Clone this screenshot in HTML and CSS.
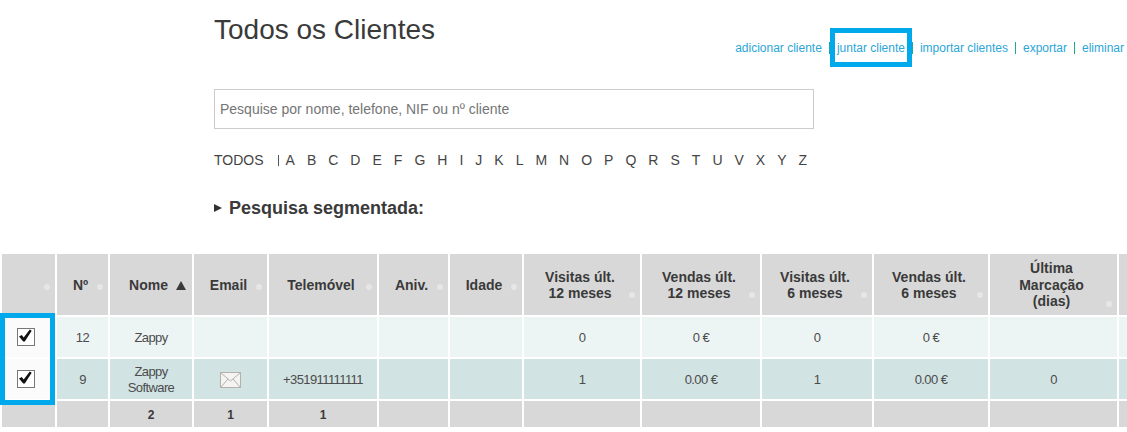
FILE: index.html
```html
<!DOCTYPE html>
<html lang="pt">
<head>
  <meta charset="UTF-8">
  <title>Todos os Clientes</title>
  <link rel="stylesheet" href="styles.css">
</head>
<body>

<div class="content">
  <div class="title-row">
    <h1>Todos os Clientes</h1>
    <div class="actions">
      <a>adicionar cliente</a>
      <a class="marked">juntar cliente</a>
      <a>importar clientes</a>
      <a>exportar</a>
      <a>eliminar</a>
    </div>
  </div>

  <input class="search" type="text" placeholder="Pesquise por nome, telefone, NIF ou nº cliente">

  <div class="letters">
    <span class="all">TODOS</span>
    <span class="sep"></span>
    <span>A</span><span>B</span><span>C</span><span>D</span><span>E</span><span>F</span><span>G</span>
    <span>H</span><span>I</span><span>J</span><span>K</span><span>L</span><span>M</span><span>N</span>
    <span>O</span><span>P</span><span>Q</span><span>R</span><span>S</span><span>T</span><span>U</span>
    <span>V</span><span>X</span><span>Y</span><span>Z</span>
  </div>

  <div class="segment"><span class="arrow"></span>Pesquisa segmentada:</div>
</div>

<div class="table-wrap">
  <table>
    <colgroup>
      <col class="c0"><col class="c1"><col class="c2"><col class="c3"><col class="c4"><col class="c5"><col class="c6">
      <col class="c7"><col class="c8"><col class="c9"><col class="c10"><col class="c11"><col class="c12">
    </colgroup>
    <thead>
      <tr>
        <th><i class="dot"></i></th>
        <th>Nº<i class="dot"></i></th>
        <th class="sorted">Nome<span class="sort-up"></span></th>
        <th>Email<i class="dot"></i></th>
        <th>Telemóvel<i class="dot"></i></th>
        <th>Aniv.<i class="dot"></i></th>
        <th>Idade<i class="dot"></i></th>
        <th>Visitas últ.<br>12 meses<i class="dot two"></i></th>
        <th>Vendas últ.<br>12 meses<i class="dot two"></i></th>
        <th>Visitas últ.<br>6 meses<i class="dot two"></i></th>
        <th>Vendas últ.<br>6 meses<i class="dot two"></i></th>
        <th>Última<br>Marcação<br>(dias)<i class="dot three"></i></th>
        <th></th>
      </tr>
    </thead>
    <tbody>
      <tr class="light">
        <td class="check">
          <svg width="18" height="18" viewBox="0 0 18 18"><rect x="0.5" y="0.5" width="17" height="17" fill="#fff" stroke="#777"/><path d="M2 8.5l2.8-1.6 1.9 2.6L12.8 1.5l1.9 1.2-6.9 10.8H6.2z" fill="#111"/></svg>
        </td>
        <td>12</td>
        <td>Zappy</td>
        <td></td>
        <td></td>
        <td></td>
        <td></td>
        <td>0</td>
        <td>0 €</td>
        <td>0</td>
        <td>0 €</td>
        <td></td>
        <td></td>
      </tr>
      <tr class="dark">
        <td class="check">
          <svg width="18" height="18" viewBox="0 0 18 18"><rect x="0.5" y="0.5" width="17" height="17" fill="#fff" stroke="#777"/><path d="M2 8.5l2.8-1.6 1.9 2.6L12.8 1.5l1.9 1.2-6.9 10.8H6.2z" fill="#111"/></svg>
        </td>
        <td>9</td>
        <td>Zappy<br>Software</td>
        <td>
          <svg class="mail" width="21" height="16" viewBox="0 0 21 16"><rect x="0.5" y="0.5" width="20" height="15" fill="#f4f4f2" stroke="#b5b1aa"/><path d="M1 1l9.5 8L20 1M1 15l7-8M20 15l-7-8" fill="none" stroke="#b5b1aa"/></svg>
        </td>
        <td>+351911111111</td>
        <td></td>
        <td></td>
        <td>1</td>
        <td>0.00 €</td>
        <td>1</td>
        <td>0.00 €</td>
        <td>0</td>
        <td></td>
      </tr>
    </tbody>
    <tfoot>
      <tr>
        <td></td><td></td><td>2</td><td>1</td><td>1</td><td></td><td></td><td></td><td></td><td></td><td></td><td></td><td></td>
      </tr>
    </tfoot>
  </table>
  <div class="check-mark"></div>
</div>

</body>
</html>
```

FILE: styles.css
```css
html, body {
  margin: 0;
  padding: 0;
  height: 432px;
  overflow: hidden;
}

body {
  font-family: "Liberation Sans", Arial, sans-serif;
  color: #333;
  background-color: #fff;
}

.content {
  margin-left: 214px;
  width: 913px;
  box-sizing: border-box;
  padding-right: 3px;
}

.title-row {
  display: flex;
  justify-content: space-between;
  height: 89px;
}

h1 {
  margin: 14px 0 0;
  font-size: 28px;
  line-height: 32px;
  font-weight: normal;
  color: #3a3a3a;
}

.actions {
  display: flex;
  align-items: center;
  height: 12px;
  margin-top: 42px;
  font-size: 12px;
  color: #2ba6d8;
}

.actions a {
  padding: 0 7px;
  border-left: 1px solid #1fa89a;
  line-height: 12px;
}

.actions a:first-child {
  border-left: none;
}

.actions a:last-child {
  padding-right: 0;
}

.marked {
  position: relative;
}

.marked::after {
  content: "";
  position: absolute;
  left: 0;
  top: -14px;
  width: 72px;
  height: 29px;
  border: 5px solid #00a8ec;
}

.search {
  display: block;
  width: 600px;
  height: 40px;
  box-sizing: border-box;
  padding: 0 5px;
  border: 1px solid #ccc;
  font-family: inherit;
  font-size: 14px;
  color: #333;
  outline: none;
}

.search::placeholder {
  color: #757575;
  opacity: 1;
}

.letters {
  display: flex;
  align-items: center;
  gap: 12px;
  margin-top: 23px;
  height: 16px;
  font-size: 14px;
  color: #444;
}

.letters .all {
  margin-right: 2px;
}

.letters .sep {
  width: 1px;
  height: 11px;
  margin-right: -5px;
  background-color: #555;
}

.segment {
  display: flex;
  align-items: center;
  margin-top: 30px;
  height: 20px;
  font-size: 18px;
  font-weight: bold;
  color: #3a3a3a;
}

.arrow {
  width: 0;
  height: 0;
  margin-right: 7px;
  border-left: 8px solid #333;
  border-top: 4px solid transparent;
  border-bottom: 4px solid transparent;
}

.table-wrap {
  position: relative;
  margin-top: 34px;
  width: 1127px;
  overflow: hidden;
}

table {
  table-layout: fixed;
  width: 1134px;
  border-collapse: separate;
  border-spacing: 2px;
  font-size: 13px;
}

.c0 { width: 53px; }
.c1 { width: 51px; }
.c2 { width: 82px; }
.c3 { width: 73px; }
.c4 { width: 108px; }
.c5 { width: 69px; }
.c6 { width: 72px; }
.c7 { width: 116px; }
.c8 { width: 118px; }
.c9 { width: 110px; }
.c10 { width: 114px; }
.c11 { width: 127px; }
.c12 { width: 13px; }

th {
  position: relative;
  height: 61px;
  padding: 1px 10px 0 6px;
  box-sizing: border-box;
  background-color: #d8d8d8;
  color: #3a3a3a;
  font-size: 14px;
  line-height: 16.5px;
  font-weight: bold;
  text-align: center;
}

th.sorted {
  padding-left: 13px;
  padding-right: 0;
}

.sort-up {
  display: inline-block;
  width: 0;
  height: 0;
  margin-left: 8px;
  border-left: 5px solid transparent;
  border-right: 5px solid transparent;
  border-bottom: 9px solid #3a3a3a;
}

.dot {
  position: absolute;
  right: 5px;
  top: 30px;
  width: 6px;
  height: 6px;
  border-radius: 50%;
  background-color: #e6e6e6;
}

.dot.two {
  top: 38px;
}

.dot.three {
  top: 47px;
}

td {
  padding: 1px 0 0;
  box-sizing: border-box;
  text-align: center;
  line-height: 16px;
  letter-spacing: -0.6px;
  color: #4c4c4c;
}

.light td {
  height: 40px;
  background-color: #edf5f4;
}

.dark td {
  height: 40px;
  background-color: #d1e3e3;
}

.light td.check,
.dark td.check {
  background-color: #fbfbfb;
  padding: 0 5px 0 0;
}

.check svg,
.mail {
  display: block;
  margin: 0 auto;
}

tfoot td {
  height: 26px;
  background-color: #d8d8d8;
  color: #3a3a3a;
  font-size: 12px;
  font-weight: bold;
  letter-spacing: 0;
}

.check-mark {
  position: absolute;
  left: 0;
  top: 61px;
  width: 45px;
  height: 82px;
  border: 5px solid #00a8ec;
}
```
